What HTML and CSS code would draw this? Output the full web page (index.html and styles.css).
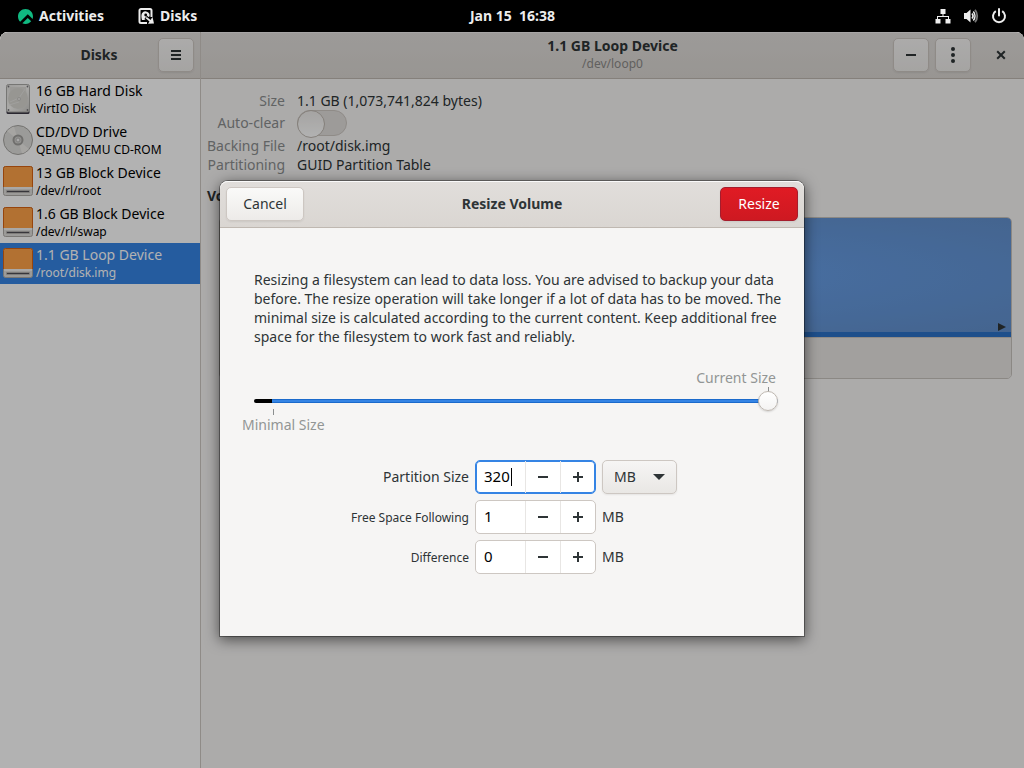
FILE: index.html
```html
<!DOCTYPE html>
<html lang="en">
<head>
<meta charset="utf-8">
<title>Disks</title>
<link rel="stylesheet" href="styles.css">
</head>
<body>
<svg class="sprites" width="0" height="0" aria-hidden="true">
  <defs>
    <linearGradient id="metal" x1="0" y1="0" x2="1" y2="1">
      <stop offset="0" stop-color="#e2e1de"/><stop offset=".5" stop-color="#f4f3f0"/><stop offset="1" stop-color="#c8c7c3"/>
    </linearGradient>
    <symbol id="block" viewBox="0 0 32 32">
      <rect x="1.5" y="1.5" width="29" height="29" rx="2" fill="#deddda" stroke="#aeaba7"/>
      <path d="M1.5 22V3.5a2 2 0 0 1 2-2h25a2 2 0 0 1 2 2V22z" fill="#ffa348"/>
      <path d="M1.5 22V3.5a2 2 0 0 1 2-2h25a2 2 0 0 1 2 2V22" fill="none" stroke="#d96413"/>
      <rect x="2" y="22" width="28" height="2" fill="#fff" opacity=".6"/>
      <rect x="4" y="25" width="24" height="3" rx="1" fill="#b5b2af"/>
      <rect x="5" y="26" width="22" height="1" fill="#504e55"/>
    </symbol>
    <symbol id="minus" viewBox="0 0 16 16"><path d="M3 7h10v2H3z"/></symbol>
    <symbol id="plus" viewBox="0 0 16 16"><path d="M3 7h4V3h2v4h4v2H9v4H7V9H3z"/></symbol>
  </defs>
</svg>

<header class="topbar">
  <nav class="topbar-left">
    <button class="top-item" type="button">
      <svg width="15" height="15" viewBox="0 0 24 24" fill="#10b981"><path d="M23.332 15.957c.433-1.239.668-2.57.668-3.957 0-6.627-5.373-12-12-12S0 5.373 0 12c0 3.28 1.315 6.251 3.447 8.417L15.62 8.245l3.005 3.005zm-2.192 3.819l-5.52-5.52L6.975 22.9c1.528.706 3.23 1.1 5.025 1.1 3.661 0 6.94-1.64 9.14-4.224z"/></svg>
      <span>Activities</span>
    </button>
    <button class="top-item app-item" type="button">
      <svg width="16" height="16" viewBox="0 0 16 16" fill="none">
        <path d="M9 15H3a1.500 1.500 0 0 1-1.500-1.500v-11A1.500 1.500 0 0 1 3 1h9a1.500 1.500 0 0 1 1.500 1.500V9" stroke="#ededed" stroke-width="2"/>
        <path d="M4 12C3.400 9.500 3 7 4 5.200a4.200 4.200 0 0 1 7.600 3L9 10.500c-1 .8-2 1.500-5 1.500z" fill="#ededed"/>
        <circle cx="7.700" cy="7" r="1.400" fill="#000"/>
        <path d="M7.800 9.300l4.500 4" stroke="#000" stroke-width="4"/>
        <path d="M8.200 9.600l4.500 3.600" stroke="#ededed" stroke-width="1.800"/>
        <path d="M14.500 9l1.500 6.500-6 .3z" fill="#ededed"/>
      </svg>
      <span>Disks</span>
    </button>
  </nav>
  <time class="clock">Jan 15&nbsp; 16:38</time>
  <button class="tray" type="button" aria-label="System menu">
    <svg width="16" height="16" viewBox="0 0 16 16" fill="#ededed"><path d="M5.500 1h5v5h-2v2H14v3h1.500v4.500h-5V11H13V9H3v2h2.500v4.500h-5V11H2V8h5.500V6h-2z"/></svg>
    <svg width="16" height="16" viewBox="0 0 16 16" fill="none"><path d="M1 5h2.500L7.500 1.500v13L3.500 11H1z" fill="#ededed"/><path d="M9 5.500a3.800 3.800 0 0 1 0 5M10.300 3.500a7 7 0 0 1 0 9" stroke="#ededed" stroke-width="1.600"/><path d="M12 1.700a10 10 0 0 1 0 12.600" stroke="#777" stroke-width="1.800"/></svg>
    <svg width="16" height="16" viewBox="0 0 16 16" fill="none" stroke="#ededed" stroke-width="2"><path d="M4.800 3.200a6 6 0 1 0 6.400 0" /><path d="M8 1v6.500" stroke-linecap="round"/></svg>
  </button>
</header>

<div class="window">
  <aside class="sidebar">
    <div class="headerbar side-header">
      <h1 class="title">Disks</h1>
      <button class="icon-button" type="button" aria-label="Menu"><svg width="16" height="16" viewBox="0 0 16 16"><path d="M3 3h10v2H3zM3 7h10v2H3zM3 11h10v2H3z"/></svg></button>
    </div>
    <ul class="devices">
      <li><a class="device" href="#hdd">
        <svg width="32" height="32" viewBox="0 0 32 32"><rect x="4.500" y="27" width="23" height="4" rx="1.500" fill="#3d3846"/><rect x="4.500" y="1.500" width="23" height="27.500" rx="2" fill="url(#metal)" stroke="#aaa9a6"/><path d="M8 4h16l1 12a9.500 10 0 0 1-18 2z" fill="#deddd9"/><ellipse cx="16" cy="15.500" rx="10" ry="10.500" fill="#d8d7d2"/><path d="M8 19l9-4 6-9M7 22l10-3" stroke="#e6e5e2" fill="none"/><circle cx="17" cy="16" r="1.500" fill="#efeeec" stroke="#c6c5c1"/><g fill="#77767b"><circle cx="6.500" cy="3.500" r=".9"/><circle cx="25.500" cy="3.500" r=".9"/><circle cx="6.500" cy="27" r=".9"/><circle cx="25.500" cy="27" r=".9"/></g></svg>
        <span class="device-text"><span class="device-name">16 GB Hard Disk</span><span class="device-sub">VirtIO Disk</span></span></a></li>
      <li><a class="device" href="#cdrom">
        <svg width="32" height="32" viewBox="0 0 32 32"><circle cx="16" cy="16" r="14.500" fill="#dfdedb" stroke="#a5a4a0"/><path d="M16 16L5 7a14 14 0 0 1 7-4.500zM16 16l11 9a14 14 0 0 1-7 4.500z" fill="#f3f2f0" opacity=".7"/><circle cx="16" cy="16" r="4.500" fill="#d2d1ce" stroke="#a09f9c" stroke-width="2"/><circle cx="16" cy="16" r="2" fill="#f4f4f4" stroke="#b4b3b0"/></svg>
        <span class="device-text"><span class="device-name">CD/DVD Drive</span><span class="device-sub">QEMU QEMU CD-ROM</span></span></a></li>
      <li><a class="device" href="#root"><svg width="32" height="32"><use href="#block"/></svg>
        <span class="device-text"><span class="device-name">13 GB Block Device</span><span class="device-sub">/dev/rl/root</span></span></a></li>
      <li><a class="device" href="#swap"><svg width="32" height="32"><use href="#block"/></svg>
        <span class="device-text"><span class="device-name">1.6 GB Block Device</span><span class="device-sub">/dev/rl/swap</span></span></a></li>
      <li><a class="device selected" href="#loop" aria-current="true"><svg width="32" height="32"><use href="#block"/></svg>
        <span class="device-text"><span class="device-name">1.1 GB Loop Device</span><span class="device-sub">/root/disk.img</span></span></a></li>
    </ul>
  </aside>

  <main class="main">
    <div class="headerbar main-header">
      <div class="main-title"><h2 class="title">1.1 GB Loop Device</h2><p class="subtitle">/dev/loop0</p></div>
      <div class="window-buttons">
        <button class="icon-button" type="button" aria-label="Minimize"><svg width="16" height="16"><use href="#minus"/></svg></button>
        <button class="icon-button" type="button" aria-label="Drive options"><svg width="16" height="16" viewBox="0 0 16 16"><circle cx="8" cy="2" r="2"/><circle cx="8" cy="8" r="2"/><circle cx="8" cy="14" r="2"/></svg></button>
        <button class="close-button" type="button" aria-label="Close"><svg width="16" height="16" viewBox="0 0 16 16" fill="none" stroke="#2e3436" stroke-width="2"><path d="M4.200 4.200l7.600 7.600M11.800 4.200l-7.600 7.600"/></svg></button>
      </div>
    </div>
    <div class="content">
      <dl class="info">
        <dt>Size</dt><dd>1.1 GB (1,073,741,824 bytes)</dd>
        <dt><label for="autoclear">Auto-clear</label></dt><dd class="switch-row"><input class="switch" id="autoclear" type="checkbox" role="switch"></dd>
        <dt>Backing File</dt><dd>/root/disk.img</dd>
        <dt>Partitioning</dt><dd>GUID Partition Table</dd>
      </dl>
      <h3 class="volumes-title">Volumes</h3>
      <div class="volumes">
        <div class="partition"><svg width="8" height="8" viewBox="0 0 8 8"><path d="M0 0l8 4-8 4z" fill="#2e3436"/></svg></div>
        <div class="volume-tools"></div>
      </div>
    </div>
  </main>

  <div class="overlay">
    <section class="dialog" role="dialog" aria-labelledby="dialog-title">
      <header class="dialog-header">
        <button class="button" type="button">Cancel</button>
        <h2 class="title" id="dialog-title">Resize Volume</h2>
        <button class="button destructive" type="button">Resize</button>
      </header>
      <div class="dialog-body">
        <p class="warning">Resizing a filesystem can lead to data loss. You are advised to backup your data before. The resize operation will take longer if a lot of data has to be moved. The minimal size is calculated according to the current content. Keep additional free space for the filesystem to work fast and reliably.</p>
        <div class="scale">
          <div class="mark mark-top"><span>Current Size</span><i class="tick"></i></div>
          <input class="slider" type="range" min="0" max="100" value="100" aria-label="Partition size">
          <div class="mark mark-bottom"><i class="tick"></i><span>Minimal Size</span></div>
        </div>
        <form class="sizes">
          <label for="size">Partition Size</label>
          <div class="spin focused"><input id="size" type="text" inputmode="numeric" value="320"><i class="caret"></i><button type="button" aria-label="Decrease partition size"><svg width="16" height="16"><use href="#minus"/></svg></button><button type="button" aria-label="Increase partition size"><svg width="16" height="16"><use href="#plus"/></svg></button></div>
          <div class="unit-picker"><select class="unit-select" aria-label="Unit"><option>MB</option><option>GB</option></select><svg class="arrow" width="12" height="6" viewBox="0 0 12 6"><path d="M0 0h12L6 6z" fill="#2e3436"/></svg></div>

          <label class="small" for="free">Free Space Following</label>
          <div class="spin"><input id="free" type="text" inputmode="numeric" value="1"><button type="button" aria-label="Decrease free space"><svg width="16" height="16"><use href="#minus"/></svg></button><button type="button" aria-label="Increase free space"><svg width="16" height="16"><use href="#plus"/></svg></button></div>
          <span class="unit">MB</span>

          <label class="small" for="diff">Difference</label>
          <div class="spin"><input id="diff" type="text" inputmode="numeric" value="0"><button type="button" aria-label="Decrease difference"><svg width="16" height="16"><use href="#minus"/></svg></button><button type="button" aria-label="Increase difference"><svg width="16" height="16"><use href="#plus"/></svg></button></div>
          <span class="unit">MB</span>
        </form>
      </div>
    </section>
  </div>
</div>
</body>
</html>
```
FILE: styles.css
```css
* { box-sizing: border-box; }
html, body { height: 100%; margin: 0; }
body {
  display: flex;
  flex-direction: column;
  background: #000;
  color: #2e3436;
  font: 14px/19px "Noto Sans", "Open Sans", sans-serif;
}
h1, h2, h3, p, dl, dd, ul { margin: 0; padding: 0; }
ul { list-style: none; }
svg { display: block; flex: none; }
button, input, select { font: inherit; color: inherit; margin: 0; }
button { padding: 0; }
.sprites { position: absolute; }

/* Shell bar */
.topbar {
  display: grid;
  grid-template-columns: 1fr auto 1fr;
  align-items: center;
  flex: none;
  height: 32px;
  padding: 0 17px 0 18px;
  color: #ededed;
  font-weight: 700;
}
.topbar-left, .tray { display: flex; align-items: center; }
.top-item { display: flex; align-items: center; gap: 6px; border: 0; background: none; }
.top-item span, .clock { padding-bottom: 2px; }
.app-item { margin-left: 34px; }
.tray { justify-self: end; gap: 12px; border: 0; background: none; }

/* Main window */
.window {
  position: relative;
  display: flex;
  flex: 1;
  min-height: 0;
  overflow: hidden;
  border-radius: 8px 8px 0 0;
  background: #f6f5f4;
}
.sidebar {
  display: flex;
  flex-direction: column;
  flex: none;
  width: 201px;
  border-right: 1px solid #cdc7c2;
  background: #fff;
}
.main { display: flex; flex-direction: column; flex: 1; min-width: 0; }
.headerbar {
  display: grid;
  align-items: center;
  flex: none;
  height: 47px;
  padding: 0 6px;
  border-bottom: 1px solid #bfb8b1;
  background: linear-gradient(#e1dedb, #dad6d2);
  box-shadow: inset 0 1px #efedec;
}
.side-header { grid-template-columns: 1fr 36px; }
.side-header .title { padding: 0 0 2px 34px; }
.main-header { grid-template-columns: 126px 1fr 126px; padding: 0 5px; }
.main-title { grid-column: 2; padding-bottom: 2px; }
.title { font-size: 14px; font-weight: 700; text-align: center; }
.subtitle { color: #8b8a88; font-size: 12px; line-height: 18px; text-align: center; }
.window-buttons { display: flex; gap: 6px; justify-content: flex-end; }
.icon-button, .close-button {
  display: flex;
  align-items: center;
  justify-content: center;
  width: 36px;
  height: 34px;
  border: 1px solid #cdc7c2;
  border-radius: 5px;
  background: linear-gradient(#f6f5f4, #edebe9);
  box-shadow: 0 1px 2px rgba(0, 0, 0, .07);
  fill: #2e3436;
}
.close-button { margin-left: 6px; border-color: transparent; background: none; box-shadow: none; }

/* Device list */
.device {
  display: flex;
  align-items: center;
  gap: 2px;
  height: 41px;
  padding: 0 0 1px 2px;
  color: #000;
  text-decoration: none;
}
.device-text { display: flex; flex-direction: column; }
.device-sub { font-size: 12px; line-height: 17px; }
.device.selected { background: #3584e4; color: #fff; }

/* Drive details */
.content { padding: 12px 12px 0 6px; }
.info { display: grid; grid-template-columns: 78px 1fr; column-gap: 12px; }
.info dt { color: #8b8e8f; text-align: right; white-space: nowrap; align-self: center; }
.info label { display: block; padding-bottom: 2px; }
.switch-row { display: flex; }
.switch {
  appearance: none;
  display: flex;
  width: 50px;
  height: 26px;
  border: 1px solid #cdc7c2;
  border-radius: 13px;
  background: #e1dedb;
}
.switch::before {
  content: "";
  width: 26px;
  height: 26px;
  margin: -1px;
  border: 1px solid #bfb8b1;
  border-radius: 50%;
  background: linear-gradient(#edebe9, #fff);
}
.volumes-title { margin-top: 12px; font-size: 14px; }
.volumes {
  margin: 12px 0 0 12px;
  overflow: hidden;
  border: 1px solid #c8c3be;
  border-radius: 5px;
}
.partition {
  display: flex;
  align-items: flex-end;
  justify-content: flex-end;
  height: 119px;
  padding: 0 5px 1px;
  border-bottom: 5px solid #2b72c8;
  background: radial-gradient(ellipse, #68a2ee, #6290cd);
}
.volume-tools { height: 41px; border-top: 1px solid #cdc7c2; background: #e8e6e3; }

/* Modal dialog */
.overlay {
  position: absolute;
  inset: 0;
  display: flex;
  align-items: center;
  justify-content: center;
  padding-top: 17px;
  background: rgba(0, 0, 0, .3);
}
.dialog {
  width: 584px;
  border-radius: 8px 8px 0 0;
  background: #f6f5f4;
  box-shadow: 0 0 0 1px rgba(0, 0, 0, .35), 0 3px 14px 1px rgba(0, 0, 0, .55);
}
.dialog-header {
  display: flex;
  align-items: center;
  justify-content: space-between;
  height: 47px;
  padding: 0 6px;
  border-bottom: 1px solid #bfb8b1;
  border-radius: 8px 8px 0 0;
  background: linear-gradient(#e1dedb, #dad6d2);
  box-shadow: inset 0 1px #fafafa;
}
.dialog-header .title { padding-bottom: 2px; }
.button {
  width: 78px;
  height: 34px;
  padding-bottom: 2px;
  border: 1px solid #cdc7c2;
  border-radius: 5px;
  background: linear-gradient(#fafaf9, #edebe9);
  box-shadow: 0 1px 2px rgba(0, 0, 0, .07);
}
.button.destructive { border-color: #a51d2d; background: linear-gradient(#e01b24, #ce1921); color: #fff; }
.dialog-body { padding: 42px 26px 62px 34px; }
.warning { margin-right: -12px; }

.scale { margin-top: 22px; }
.mark { display: flex; flex-direction: column; color: #929595; }
.tick { width: 1px; height: 6px; background: #8b8e8f; }
.mark-top { align-items: flex-end; padding-right: 2px; }
.mark-top .tick { margin-right: 7px; }
.slider {
  appearance: none;
  display: block;
  width: 100%;
  height: 20px;
  margin: -2px 0 -2px;
  background: none;
}
.slider::-webkit-slider-runnable-track {
  height: 4px;
  border-radius: 2px;
  background: linear-gradient(90deg, #000 18px, transparent 18px), linear-gradient(#1b6acb 1px, #3584e4 1px 3px, #1b6acb 3px);
}
.slider::-webkit-slider-thumb {
  appearance: none;
  width: 20px;
  height: 20px;
  margin-top: -8px;
  border: 1px solid #bfb8b1;
  border-radius: 50%;
  background: linear-gradient(#fff, #f4f3f2);
  box-shadow: 0 1px 2px rgba(0, 0, 0, .15);
}
.mark-bottom .tick { margin-left: 19px; }
.mark-bottom span { margin-left: -12px; }

.sizes {
  display: grid;
  grid-template-columns: 215px 121px 75px;
  align-items: center;
  gap: 6px;
  margin-top: 26px;
}
.sizes label { padding-bottom: 2px; text-align: right; }
.sizes .small { padding-bottom: 0; font-size: 12px; }
.unit { padding-bottom: 2px; }
.spin {
  position: relative;
  display: grid;
  grid-template-columns: 1fr 35px 35px;
  height: 34px;
  overflow: hidden;
  border: 1px solid #cdc7c2;
  border-radius: 5px;
  background: #fff;
}
.spin.focused { border-color: #3584e4; box-shadow: inset 0 0 0 1px #3584e4; }
.spin input { width: 100%; padding: 0 8px 2px; border: 0; outline: 0; background: none; color: #000; font-size: 15px; }
.spin button {
  display: grid;
  place-items: center;
  border: 0;
  border-left: 1px solid #e8e6e4;
  background: none;
  fill: #2e3436;
}
.caret { position: absolute; left: 35px; top: 7px; width: 1px; height: 18px; background: #000; }
.unit-picker { position: relative; }
.unit-select {
  appearance: none;
  display: block;
  width: 100%;
  height: 34px;
  padding: 0 11px 2px;
  border: 1px solid #cdc7c2;
  border-radius: 5px;
  background: linear-gradient(#f6f5f4, #e9e7e4);
  box-shadow: 0 1px 2px rgba(0, 0, 0, .07);
}
.arrow { position: absolute; right: 12px; top: 14px; pointer-events: none; }
```
